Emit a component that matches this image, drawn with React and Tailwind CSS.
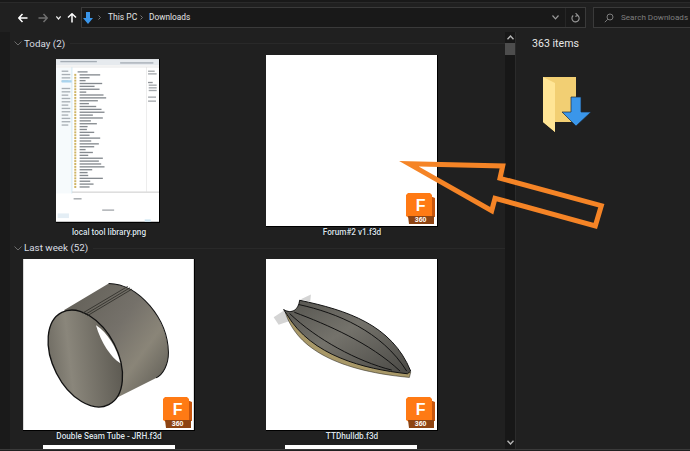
import React from "react";

const FONT = "font-['Roboto','Liberation_Sans',sans-serif]";

const rowWidths = [62, 30, 18, 68, 45, 60, 20, 72, 80, 55, 28, 50, 66, 75, 40, 70, 34, 52, 24, 22, 44, 30, 62, 35, 58, 44, 18, 40, 26, 70, 58, 65, 75, 38, 24, 26, 70, 32, 42, 30];

// the small library screenshot in the first tile
const LibraryThumb = () => (
  <svg width="103" height="163" viewBox="47 24 310 489" className="block">
    <rect x="47" y="24" width="310" height="489" fill="#fff" />
    <rect x="47" y="24" width="310" height="18" fill="#e6eaee" />
    <rect x="47" y="42" width="310" height="8" fill="#f2f2f2" />
    <rect x="60" y="29" width="110" height="4" fill="#a4acb4" />
    <rect x="240" y="33" width="100" height="4" fill="#a4acb4" />
    <rect x="47" y="50" width="47" height="378" fill="#f6fafc" />
    <rect x="94" y="48" width="2" height="380" fill="#bfe0f0" />
    {[48, 58, 68, 78, 100, 110, 120, 130, 140, 150, 160, 170, 180, 190, 200, 210].map((y, i) => (
      <rect key={y} x="64" y={y + 10} width={i % 3 === 0 ? 20 : 26} height="4" fill="#a8afb5" />
    ))}
    <rect x="64" y="87" width="30" height="7" fill="#a9d4ee" />
    <rect x="112" y="60" width="30" height="4" fill="#8a9096" />
    {rowWidths.map((w, i) => (
      <g key={i}>
        <rect x="102" y={68 + i * 8.65} width="6" height="6" fill="#cfb566" />
        <rect x="118" y={69 + i * 8.65} width={w} height="4" fill="#858a8f" />
      </g>
    ))}
    <rect x="318" y="48" width="1" height="375" fill="#c8c8c8" />
    <rect x="324" y="58" width="20" height="4" fill="#a4a8ac" />
    <rect x="324" y="66" width="26" height="4" fill="#a4a8ac" />
    <rect x="324" y="92" width="14" height="4" fill="#8f9397" />
    <rect x="326" y="100" width="24" height="4" fill="#a4a8ac" />
    <rect x="326" y="108" width="24" height="4" fill="#a4a8ac" />
    <rect x="326" y="116" width="24" height="4" fill="#a4a8ac" />
    <rect x="324" y="136" width="24" height="4" fill="#a4a8ac" />
    <rect x="324" y="148" width="24" height="4" fill="#a4a8ac" />
    <rect x="95" y="422" width="262" height="4" fill="#d8d8d8" />
    <rect x="100" y="442" width="24" height="4" fill="#a0a4a8" />
    <rect x="186" y="476" width="36" height="4" fill="#a4a8ac" />
    <rect x="52" y="488" width="34" height="14" fill="#e4eef5" />
    <rect x="314" y="506" width="18" height="7" fill="#cfe6f2" />
  </svg>
);

const TubeThumb = () => (
  <svg width="171" height="171" viewBox="72 60 511 512" className="block">
    <defs>
      <linearGradient id="tubeBody" x1="0.1" y1="0.1" x2="0.9" y2="0.8">
        <stop offset="0" stopColor="#65625a" />
        <stop offset="0.45" stopColor="#75716a" />
        <stop offset="0.75" stopColor="#8a8578" />
        <stop offset="1" stopColor="#6a675e" />
      </linearGradient>
      <linearGradient id="tubeInner" x1="0" y1="0" x2="1" y2="0.6">
        <stop offset="0" stopColor="#625f57" />
        <stop offset="0.4" stopColor="#8a867b" />
        <stop offset="1" stopColor="#5f5c54" />
      </linearGradient>
    </defs>
    <rect x="72" y="60" width="511" height="512" fill="#fff" />
    <path d="M195,213 L328,133 C420,135 505,240 507,340 C507,375 492,405 470,416 L300,502 Z" fill="url(#tubeBody)" />
    <path d="M328,133 C420,135 505,240 507,340 C507,375 492,405 470,416" fill="none" stroke="#111" strokeWidth="3" />
    <ellipse cx="258" cy="358" rx="97" ry="155" transform="rotate(-27 258 358)" fill="url(#tubeInner)" stroke="#111" strokeWidth="4" />
    <path d="M290,258 C305,310 335,355 363,372 C352,325 325,280 290,258 Z" fill="#fff" />
    <path d="M250,222 L385,142 M258,226 L392,146 M264,230 L398,150" stroke="#2e2d28" strokeWidth="2.5" fill="none" />
  </svg>
);

const HullThumb = () => (
  <svg width="171" height="171" viewBox="47 28 514 514" className="block">
    <defs>
      <linearGradient id="hullFill" x1="0" y1="0" x2="1" y2="1">
        <stop offset="0" stopColor="#55544f" />
        <stop offset="0.45" stopColor="#74726b" />
        <stop offset="1" stopColor="#4a4945" />
      </linearGradient>
    </defs>
    <rect x="47" y="28" width="514" height="514" fill="#fff" />
    <path d="M150,150 L182,135 L180,156 Z M70,203 L102,182 L125,212 L85,226 Z" fill="#d4d4d4" />
    <path d="M105,188 C135,285 240,362 478,384 L482,368 C360,355 230,320 105,188 Z" fill="#a89868" stroke="#1a1a1a" strokeWidth="1.5" />
    <path d="M148,152 C290,182 425,225 482,365 L472,373 C340,358 185,320 110,195 L100,180 C125,195 145,180 148,152 Z" fill="url(#hullFill)" stroke="#111" strokeWidth="3" />
    <path d="M146,165 C260,190 395,245 470,365 M132,188 C230,225 360,280 450,365 M118,192 C200,270 320,335 425,362" fill="none" stroke="#111" strokeWidth="3" />
  </svg>
);

// Fusion 360 file badge
const FusionBadge = () => (
  <svg width="30" height="32" viewBox="0 0 30 32" className="absolute right-[1px] bottom-[1px]">
    <path d="M24,3 L29,5 L29,24 L24,24 Z" fill="#c8560e" />
    <path d="M0,2 L2,0 L24,0 L26,2 L26,23 L3,23 L3,25 L0,23 Z" fill="#ff7a14" />
    <path d="M2,23 L28,23 L28,31 L3,31 Z" fill="#8e4412" />
    <text x="14.6" y="17.7" textAnchor="middle" fontSize="16" fontWeight="700" fill="#fff" fontFamily="Liberation Sans, sans-serif">F</text>
    <text x="14.6" y="29" textAnchor="middle" fontSize="7" fontWeight="700" fill="#fff" fontFamily="Liberation Sans, sans-serif">360</text>
  </svg>
);

const Tile = ({ label, children, badge, thumbClass = "" }) => (
  <div className="flex w-[188px] flex-col items-center">
    <div className="flex h-[172px] items-center justify-center">
      <div className={`relative border-r border-b border-black ${thumbClass}`}>
        {children}
        {badge && <FusionBadge />}
      </div>
    </div>
    <div className="h-[10px] whitespace-nowrap text-[8.2px] leading-[10px] font-medium text-[#dde3ea] [text-shadow:0_0_2px_#000]">{label}</div>
  </div>
);

const GroupHeader = ({ title, className }) => (
  <div className={`flex items-center pl-[4px] ${className}`}>
    <svg width="8" height="5" viewBox="0 0 8 5" className="shrink-0">
      <path d="M0.5,0.5 L4,4 L7.5,0.5" fill="none" stroke="#6b6b6b" />
    </svg>
    <span className="ml-[2px] whitespace-nowrap text-[9.8px] leading-none text-[#d9dde2]">{title}</span>
    <div className="ml-[5px] h-px flex-1 bg-[#292929]" />
  </div>
);

export default function App() {
  return (
    <div className={`relative flex h-[451px] w-[690px] flex-col overflow-hidden bg-[#202020] ${FONT}`}>
      {/* top strip + toolbar */}
      <div className="h-[3px] border-b border-[#2a2a2a] bg-[#191919]" />
      <div className="flex h-[29px] items-center pl-[10px]">
        <div className="flex w-[71px] items-center">
          <svg width="10" height="10" viewBox="0 0 10 10" className="ml-[8px]">
            <path d="M9.5,5 H1 M4.5,1 L0.8,5 L4.5,9" fill="none" stroke="#fff" strokeWidth="1.5" />
          </svg>
          <svg width="10" height="10" viewBox="0 0 10 10" className="ml-[10px]">
            <path d="M0.5,5 H9 M5.5,1 L9.2,5 L5.5,9" fill="none" stroke="#6f6f6f" strokeWidth="1.5" />
          </svg>
          <svg width="5" height="4" viewBox="0 0 5 4" className="ml-[8px]">
            <path d="M0.3,0.5 L2.5,3 L4.7,0.5" fill="none" stroke="#eee" strokeWidth="1.2" />
          </svg>
          <svg width="10" height="10" viewBox="0 0 10 10" className="ml-[6px] mt-[1px]">
            <path d="M5,9.5 V1 M1,4.5 L5,0.8 L9,4.5" fill="none" stroke="#fff" strokeWidth="1.5" />
          </svg>
        </div>
        <div className="flex h-[21px] w-[505px] items-center border border-[#3a3a3a] bg-[#191919]">
          <svg width="10" height="12" viewBox="0 0 10 12" className="ml-[1px]">
            <path d="M3,0 H7 V6 H10 L5,12 L0,6 H3 Z" fill="#3a96ea" />
          </svg>
          <svg width="3" height="5" viewBox="0 0 3 5" className="ml-[5px]">
            <path d="M0.5,0.5 L2.5,2.5 L0.5,4.5" fill="none" stroke="#777" />
          </svg>
          <span className="ml-[7px] w-[26px] whitespace-nowrap text-[8.5px] leading-none text-[#e4e4e4]">This PC</span>
          <svg width="3" height="5" viewBox="0 0 3 5" className="ml-[6px]">
            <path d="M0.5,0.5 L2.5,2.5 L0.5,4.5" fill="none" stroke="#777" />
          </svg>
          <span className="ml-[6px] whitespace-nowrap text-[8.3px] leading-none text-[#e4e4e4]">Downloads</span>
          <div className="ml-auto flex h-full items-center">
            <svg width="7" height="5" viewBox="0 0 7 5">
              <path d="M0.5,0.5 L3.5,3.8 L6.5,0.5" fill="none" stroke="#9a9a9a" strokeWidth="1.2" />
            </svg>
            <div className="ml-[6px] flex h-full w-[20px] items-center justify-center border-l border-[#262626]">
              <svg width="9" height="10" viewBox="0 0 9 10">
                <path d="M6.6,2.3 A3.6,3.6 0 1 1 2.2,2.5 M4.6,0.2 L6.8,2.3 L4.4,3.6" fill="none" stroke="#9a9a9a" strokeWidth="1.1" />
              </svg>
            </div>
          </div>
        </div>
        <div className="ml-[7px] flex h-[21px] flex-1 items-center border border-r-0 border-[#3a3a3a] bg-[#191919] pl-[10px]">
          <svg width="10" height="10" viewBox="0 0 10 10">
            <circle cx="6" cy="4" r="3" fill="none" stroke="#7c7c7c" />
            <path d="M3.8,6.2 L0.8,9.2" stroke="#7c7c7c" />
          </svg>
          <span className="ml-[7px] whitespace-nowrap text-[8.1px] leading-none text-[#7e7e7e]">Search Downloads</span>
        </div>
      </div>

      <div className="flex h-[418px] border-b border-[#3a3a3a]">
        <div className="w-[10px] shrink-0 bg-[#1a1a1a]" />
        {/* file list */}
        <div className="w-[495px] shrink-0 overflow-hidden">
          <GroupHeader title="Today (2)" className="h-[23px]" />
          <div className="flex gap-[55px] pl-[5px]">
            <Tile label="local tool library.png" thumbClass="mr-[2px]">
              <LibraryThumb />
            </Tile>
            <Tile label="Forum#2 v1.f3d" badge>
              <div className="h-[171px] w-[171px] bg-white" />
            </Tile>
          </div>
          <GroupHeader title="Last week (52)" className="h-[22px]" />
          <div className="flex gap-[55px] pl-[5px]">
            <Tile label="Double Seam Tube - JRH.f3d" badge>
              <TubeThumb />
            </Tile>
            <Tile label="TTDhulldb.f3d" badge>
              <HullThumb />
            </Tile>
          </div>
          <div className="mt-[4px] flex gap-[110px] pl-[33px]">
            <div className="h-[6px] w-[132px] bg-white" />
            <div className="h-[6px] w-[132px] bg-white" />
          </div>
        </div>
        {/* scrollbar */}
        <div className="flex w-[11px] shrink-0 flex-col items-center border-r border-[#2b2b2b] bg-[#171717]">
          <svg width="7" height="5" viewBox="0 0 7 5" className="mt-[3px]">
            <path d="M0.5,4.2 L3.5,1 L6.5,4.2" fill="none" stroke="#b5b5b5" strokeWidth="1.4" />
          </svg>
          <div className="mt-[3px] h-[12px] w-full bg-[#4d4d4d]" />
          <svg width="7" height="5" viewBox="0 0 7 5" className="mt-auto mb-[4px]">
            <path d="M0.5,0.8 L3.5,4 L6.5,0.8" fill="none" stroke="#b5b5b5" strokeWidth="1.4" />
          </svg>
        </div>
        {/* details pane */}
        <div className="flex-1 pl-[16px]">
          <div className="mt-[6px] text-[10.6px] leading-[12px] text-[#e8e8e8]">363 items</div>
          <svg width="49" height="56" viewBox="0 0 49 56" className="ml-[11px] mt-[27px]">
            <path d="M0,0 H33 V45 H12 V55 L0,45 Z" fill="#f2cf73" />
            <path d="M0,0 L12,6 V55 L0,45 Z" fill="#ffe596" />
            <path d="M28,20 H38 V35 H48 L33,49 L19,35 H28 Z" fill="#3a96ea" stroke="#1d2a36" strokeWidth="0.7" />
          </svg>
        </div>
      </div>

      {/* hand-drawn annotation arrow */}
      <svg width="690" height="451" viewBox="0 0 690 451" className="pointer-events-none absolute top-0 left-0">
        <path
          d="M409,163.8 L502.7,166 L500,178.3 L601.3,205.7 L595.3,226 L495,198.3 L491.7,210.7 Z"
          fill="none"
          stroke="#f58426"
          strokeWidth="5"
          strokeLinejoin="miter"
          strokeMiterlimit="12"
        />
      </svg>
    </div>
  );
}
